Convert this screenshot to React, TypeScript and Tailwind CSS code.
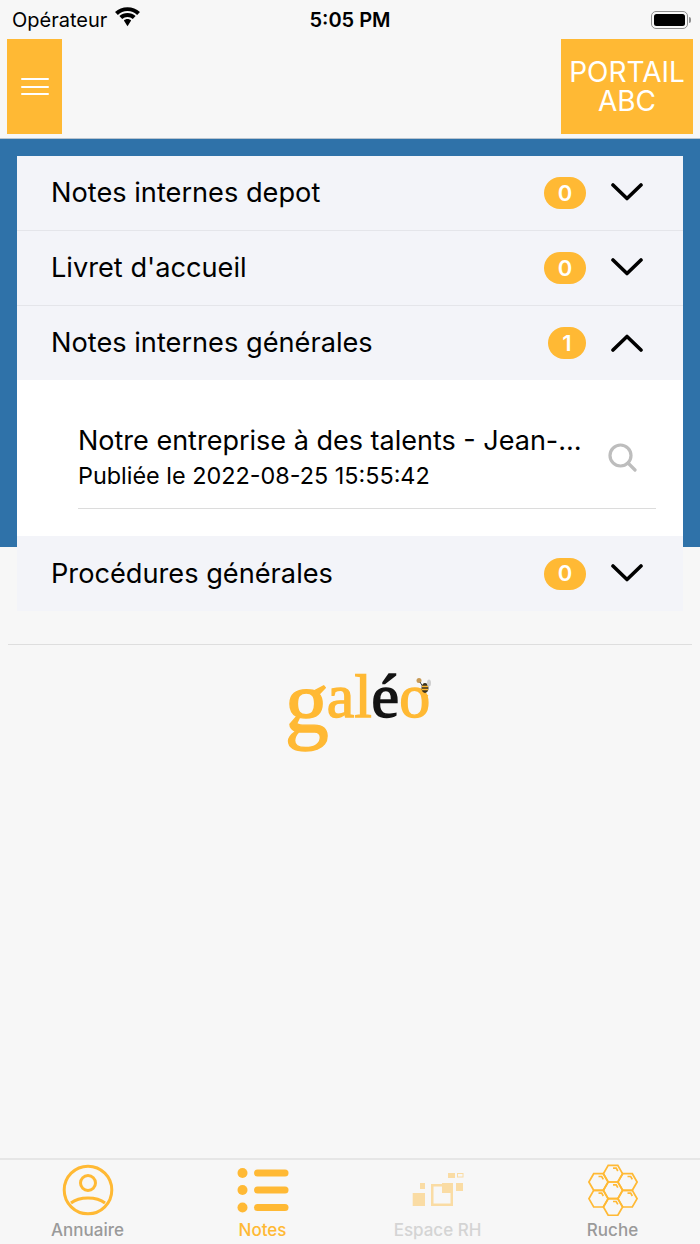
const sans = 'font-["Inter","Liberation_Sans",sans-serif]';

function Chevron({ up }: { up?: boolean }) {
  return (
    <svg className={up ? "" : "mb-[2px]"} width="32" height="20" viewBox="0 0 32 20" fill="none" stroke="#000" strokeWidth="3.6" strokeLinecap="round" strokeLinejoin="round">
      <path d={up ? "M2 17 L16 3.500 L30 17" : "M2 3 L16 16.500 L30 3"} />
    </svg>
  );
}

function Row({ title, count, open, last }: { title: string; count: number; open?: boolean; last?: boolean }) {
  return (
    <div className={`flex items-center pl-[34px] pr-[40px] bg-[#f3f4f9] ${open ? "h-[74px]" : "h-[75px]"} ${last ? "" : "border-b border-[#e4e5ea]"}`}>
      <span className="flex-1 pt-[1px] text-[27.200px] text-black">{title}</span>
      <span className={`mr-[1px] h-[32px] rounded-full bg-[#ffb934] text-white text-[22px] font-semibold flex items-center justify-center ${count === 1 ? "w-[38px]" : "w-[42px]"}`}>
        {count}
      </span>
      <span className="ml-[24px] w-[32px] flex justify-center">
        <Chevron up={open} />
      </span>
    </div>
  );
}

function StatusBar() {
  return (
    <div className="h-[39px] relative flex items-center pl-[12px] pr-[9px] text-black">
      <span className="text-[20px]">Opérateur</span>
      <svg className="ml-[7px] mb-[5px]" width="27" height="20" viewBox="0 0 26 19" fill="#000">
        <path d="M13 3.800c3.600 0 6.800 1.300 9.300 3.700l2.700-2.900C21.800 1.600 17.600 0 13 0S4.200 1.600 1 4.600l2.700 2.900C6.200 5.100 9.400 3.800 13 3.800z" />
        <path d="M13 9.500c2 0 3.700.7 5.100 2l2.700-2.900C18.700 6.700 16 5.600 13 5.600S7.300 6.700 5.200 8.600l2.700 2.900c1.400-1.300 3.100-2 5.100-2z" />
        <path d="M13 11.500c-1.400 0-2.600.5-3.500 1.400L13 18.500l3.500-5.600c-.9-.9-2.100-1.400-3.500-1.400z" />
      </svg>
      <span className="absolute left-0 right-0 text-center text-[20px] font-semibold pointer-events-none">5:05 PM</span>
      <span className="ml-auto flex items-center">
        <span className="w-[37px] h-[18px] rounded-[5px] border-[1.500px] border-[#8e8e8e] p-[2px] flex">
          <span className="flex-1 rounded-[2.500px] bg-black" />
        </span>
        <span className="w-[2px] h-[6px] rounded-r-sm bg-[#8e8e8e] ml-[1px]" />
      </span>
    </div>
  );
}

function Logo() {
  return (
    <div className="relative flex justify-center pl-[15px] mt-[6px] h-[106px]">
      <span className='font-["Liberation_Serif",serif] text-[62px] leading-[74px] [-webkit-text-stroke:1.400px_#ffb934] text-[#ffb934] whitespace-nowrap'>
        <span className="inline-block text-[88px] leading-[74px] translate-y-[15px] mr-[-2px]">g</span>
        al
        <span className="text-[#141414] [-webkit-text-stroke:1.600px_#141414]">é</span>
        o
      </span>
      <svg className="absolute left-[415px] top-[26px]" width="18" height="20" viewBox="0 0 18 20">
        <circle cx="4" cy="3.500" r="2.500" fill="#c89a55" />
        <path d="M5 5 L8 10" stroke="#444" strokeWidth="1" />
        <ellipse cx="10" cy="11" rx="3.500" ry="5" fill="#3a3320" />
        <path d="M7 9.500h6M7 12.500h6" stroke="#ffb934" strokeWidth="1.300" />
        <ellipse cx="14" cy="6" rx="2" ry="3.500" fill="#cfcfcf" />
        <path d="M9 17 L13 19" stroke="#ffb934" strokeWidth="1.500" />
      </svg>
    </div>
  );
}

function PersonIcon() {
  return (
    <svg width="52" height="52" viewBox="0 0 52 52" fill="none" stroke="#ffb934" strokeWidth="3">
      <circle cx="26" cy="26" r="23.800" />
      <circle cx="26" cy="19" r="7.500" />
      <path d="M9 39C14 35 20 34 26 34s12 1 17 5" />
    </svg>
  );
}

function ListIcon() {
  return (
    <svg width="52" height="48" viewBox="0 0 52 48" fill="#ffb934">
      <circle cx="5.500" cy="7" r="5" />
      <circle cx="5.500" cy="24" r="5" />
      <circle cx="5.500" cy="41.500" r="5" />
      <rect x="17" y="3.500" width="34.500" height="7" rx="3.500" />
      <rect x="17" y="20.500" width="34.500" height="7" rx="3.500" />
      <rect x="17" y="38" width="34.500" height="7" rx="3.500" />
    </svg>
  );
}

function RhIcon() {
  return (
    <svg width="52" height="34" viewBox="0 0 52 34" fill="#fadca4">
      <rect x="0.700" y="20" width="12.300" height="13" />
      <rect x="8" y="10" width="5" height="6" />
      <rect x="20.250" y="12.250" width="19.500" height="19.500" fill="none" stroke="#fadca4" strokeWidth="2.500" />
      <rect x="30" y="10" width="11" height="10" />
      <rect x="36" y="0" width="7" height="5" />
      <rect x="45.500" y="0.500" width="5.500" height="3.500" fill="none" stroke="#fadca4" />
      <rect x="44" y="10" width="7" height="8" />
    </svg>
  );
}

function HiveIcon() {
  const cells = [
    [25, 9.700],
    [10.500, 18],
    [39.500, 18],
    [25, 26.300],
    [10.500, 34.700],
    [39.500, 34.700],
    [25, 43],
  ];
  return (
    <svg width="50" height="52" viewBox="0 0 50 52" fill="none" stroke="#ffb934" strokeWidth="1.700">
      {cells.map(([x, y]) => (
        <g key={`${x}-${y}`}>
          <path d={`M${x - 9.600} ${y} l4.800 -8.300 h9.600 l4.800 8.300 l-4.800 8.300 h-9.600 z`} />
          <path d={`M${x} ${y - 5.500} h3.200 l1.600 2.800`} />
        </g>
      ))}
    </svg>
  );
}

function Tab({ label, color, children }: { label: string; color: string; children: React.ReactNode }) {
  return (
    <div className="flex-1 flex flex-col items-center pt-[3px]">
      <div className="h-[54px] flex items-center justify-center">{children}</div>
      <span className={`mt-[3px] text-[17px] font-medium leading-[20px] ${color}`}>{label}</span>
    </div>
  );
}

export default function App() {
  return (
    <div className={`${sans} w-[700px] h-[1244px] bg-[#f7f7f7] flex flex-col overflow-hidden`}>
      <StatusBar />
      <div className="h-[100px] px-[7px] flex justify-between items-start border-b border-[#b9c4cf]">
        <button className="w-[55px] h-[95px] bg-[#ffb934] flex flex-col items-center justify-center gap-[5.500px]">
          <span className="w-[28px] h-[2px] rounded-full bg-white" />
          <span className="w-[28px] h-[2px] rounded-full bg-white" />
          <span className="w-[28px] h-[2px] rounded-full bg-white" />
        </button>
        <button className="w-[132px] h-[95px] bg-[#ffb934] text-white text-[28px] leading-[29px] text-center">
          PORTAIL
          <br />
          ABC
        </button>
      </div>

      <div className="h-[408px] shrink-0 bg-[#2f72a9] px-[17px] pt-[17px]">
        <Row title="Notes internes depot" count={0} />
        <Row title="Livret d'accueil" count={0} />
        <Row title="Notes internes générales" count={1} open last />
        <div className="bg-white h-[156px] pl-[61px] pr-[27px]">
          <div className="h-[129px] pt-[28px] flex items-center border-b border-[#dcdcdc]">
            <div className="flex-1 min-w-0">
              <p className="text-[27px] leading-[36px] truncate w-[504px]">Notre entreprise à des talents - Jean-Michel Dupont</p>
              <p className="text-[23.400px] leading-[34px]">Publiée le 2022-08-25 15:55:42</p>
            </div>
            <svg className="mr-[19px] mb-[2px]" width="29" height="29" viewBox="0 0 29 29" fill="none" stroke="#bdbdbd" strokeWidth="3.200" strokeLinecap="round">
              <circle cx="12.500" cy="12.500" r="10.500" />
              <path d="M20 20 L27 27" />
            </svg>
          </div>
        </div>
        <Row title="Procédures générales" count={0} last />
      </div>

      <div className="mt-[97px] mx-[8px] border-t border-[#dedede]" />
      <Logo />

      <div className="mt-auto h-[86px] border-t-2 border-[#e6e6e6] flex">
        <Tab label="Annuaire" color="text-[#9a9a9a]"><PersonIcon /></Tab>
        <Tab label="Notes" color="text-[#ffb934]"><ListIcon /></Tab>
        <Tab label="Espace RH" color="text-[#d4d4d4]"><RhIcon /></Tab>
        <Tab label="Ruche" color="text-[#9a9a9a]"><HiveIcon /></Tab>
      </div>
    </div>
  );
}
